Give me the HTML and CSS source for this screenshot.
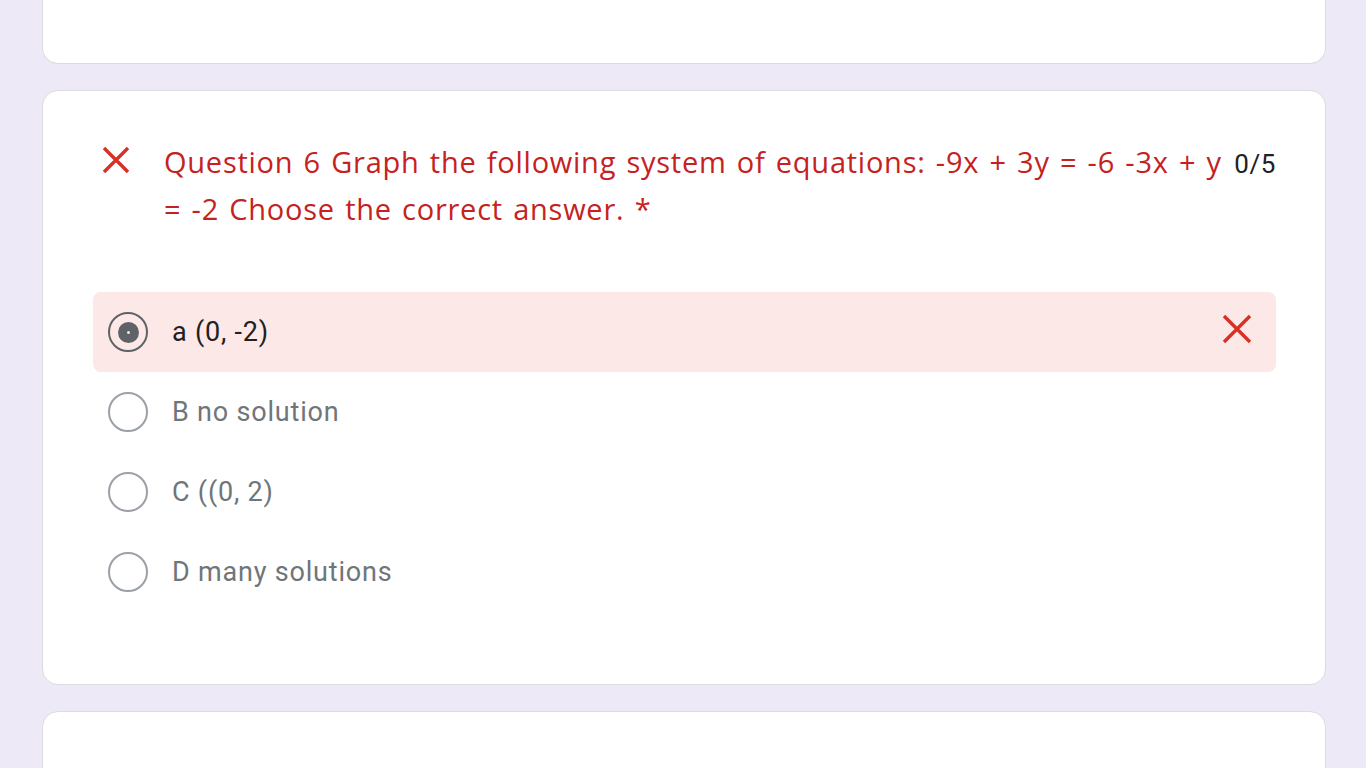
FILE: index.html
```html
<!DOCTYPE html>
<html>
<head>
<meta charset="utf-8">
<link rel="stylesheet" href="styles.css">
</head>
<body>
<div class="page">
  <div class="card card-top"></div>
  <div class="card card-q">
    <div class="q-head">
      <svg class="q-x" width="30" height="30" viewBox="0 0 30 30"><path d="M3 3 L27 27 M27 3 L3 27" stroke="#d93025" stroke-width="3.4" fill="none"/></svg>
      <div class="q-title">Question 6 Graph the following system of equations: -9x + 3y = -6 -3x + y = -2 Choose the correct answer. *</div>
      <div class="q-score">0/5</div>
    </div>
    <div class="options">
      <div class="opt opt-wrong">
        <span class="radio radio-on"><span class="dot"></span></span>
        <span class="opt-label opt-label-sel">a (0, -2)</span>
        <svg class="opt-x" width="30" height="30" viewBox="0 0 30 30"><path d="M2 2 L28 28 M28 2 L2 28" stroke="#d93025" stroke-width="3.4" fill="none"/></svg>
      </div>
      <div class="opt">
        <span class="radio"></span>
        <span class="opt-label">B no solution</span>
      </div>
      <div class="opt">
        <span class="radio"></span>
        <span class="opt-label">C ((0, 2)</span>
      </div>
      <div class="opt">
        <span class="radio"></span>
        <span class="opt-label">D many solutions</span>
      </div>
    </div>
  </div>
  <div class="card card-bottom"></div>
</div>
</body>
</html>
```
FILE: styles.css
```css
html, body {
  margin: 0;
  padding: 0;
  background: #ede9f7;
  height: 768px;
  overflow: hidden;
}
.page {
  display: flex;
  flex-direction: column;
  gap: 26px;
  padding: 0 40px 0 42px;
}
.card {
  background: #fff;
  border: 1px solid #dadce0;
  border-radius: 16px;
  box-sizing: border-box;
}
.card-top {
  height: 64px;
  border-top: 0;
  border-radius: 0 0 16px 16px;
}
.card-bottom {
  height: 80px;
}
.card-q {
  height: 595px;
  padding: 47px 49px 0 50px;
}
.q-head {
  display: flex;
  align-items: flex-start;
  padding-left: 8px;
}
.q-x {
  flex: 0 0 auto;
  margin-top: 7px;
  margin-right: 33px;
}
.q-title {
  flex: 1 1 auto;
  font-family: "Open Sans", sans-serif;
  font-size: 29px;
  line-height: 47px;
  letter-spacing: 0.75px;
  word-spacing: 2px;
  color: #c5221f;
}
.q-score {
  flex: 0 0 auto;
  font-family: Roboto, sans-serif;
  font-size: 26px;
  letter-spacing: 0.6px;
  line-height: 47px;
  color: #202124;
  margin-left: 0;
  padding-top: 3px;
}
.options {
  margin-top: 60px;
  display: flex;
  flex-direction: column;
}
.opt {
  display: flex;
  align-items: center;
  height: 80px;
  padding-left: 15px;
  padding-right: 24px;
  border-radius: 8px;
}
.opt-wrong {
  background: #fce8e6;
}
.radio {
  width: 40px;
  height: 40px;
  box-sizing: border-box;
  border: 2px solid #9aa0a6;
  border-radius: 50%;
  flex: 0 0 auto;
  display: flex;
  align-items: center;
  justify-content: center;
}
.radio-on {
  border-color: #5f6368;
}
.dot {
  width: 21px;
  height: 21px;
  border-radius: 50%;
  background: #5f6368;
  display: flex;
  align-items: center;
  justify-content: center;
}
.dot::after {
  content: "";
  width: 3px;
  height: 3px;
  border-radius: 50%;
  background: #e8eaed;
}
.opt-label {
  margin-left: 24px;
  font-family: Roboto, sans-serif;
  font-size: 27px;
  letter-spacing: 0.8px;
  color: #70757a;
  flex: 1 1 auto;
}
.opt-label-sel {
  color: #202124;
}
.opt-x {
  flex: 0 0 auto;
  margin-top: -6px;
}
```
